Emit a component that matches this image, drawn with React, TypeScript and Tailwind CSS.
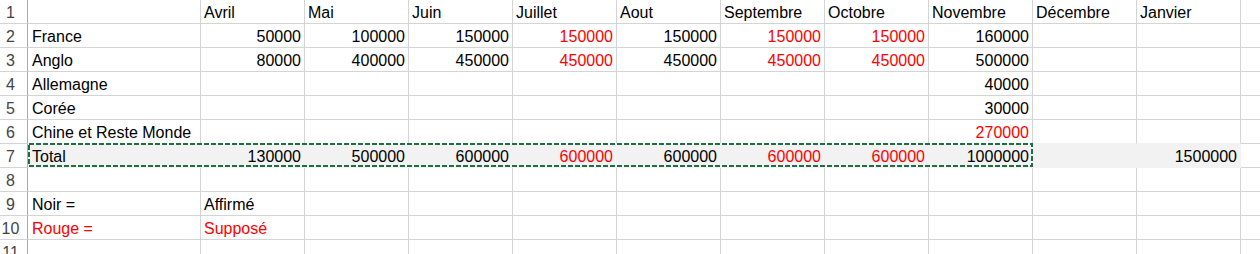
import React from "react";

type Cell = { v: string; red?: boolean; num?: boolean };

const months = ["Avril", "Mai", "Juin", "Juillet", "Aout", "Septembre", "Octobre", "Novembre", "Décembre", "Janvier"];

// red columns (index in months): Juillet, Septembre, Octobre
const redCols = [3, 5, 6];

function numRow(label: string, values: (string | null)[], redIdx: number[] = redCols): Cell[] {
  return [
    { v: label },
    ...values.map((v, i) => ({ v: v ?? "", num: true, red: redIdx.includes(i) })),
  ];
}

const rows: Cell[][] = [
  [{ v: "" }, ...months.map((m) => ({ v: m }))],
  numRow("France", ["50000", "100000", "150000", "150000", "150000", "150000", "150000", "160000", null, null]),
  numRow("Anglo", ["80000", "400000", "450000", "450000", "450000", "450000", "450000", "500000", null, null]),
  numRow("Allemagne", [null, null, null, null, null, null, null, "40000", null, null]),
  numRow("Corée", [null, null, null, null, null, null, null, "30000", null, null]),
  numRow("Chine et Reste Monde", [null, null, null, null, null, null, null, "270000", null, null], [7]),
  numRow("Total", ["130000", "500000", "600000", "600000", "600000", "600000", "600000", "1000000", null, "1500000"]),
  [],
  [{ v: "Noir =" }, { v: "Affirmé" }],
  [{ v: "Rouge =", red: true }, { v: "Supposé", red: true }],
  [],
];

const TOTAL_ROW = 6;
const COLS = 12; // A..J + the partial K column

export default function App() {
  return (
    <div
      className="relative w-[1260px] h-[254px] overflow-hidden bg-white text-[16px] leading-[16px] text-black"
      style={{ fontFamily: '"Liberation Sans", Arial, sans-serif' }}
    >
      {rows.map((row, r) => {
        const filled = r === TOTAL_ROW;
        const aboveFill = r === TOTAL_ROW - 1;
        return (
          <div key={r} className="flex h-[24px]">
            <div className="w-[28px] h-[24px] shrink-0 border-r border-r-[#ababab] border-b border-b-[#d4d4d4] flex items-end pb-[2px]">
              <span className="w-[21px] text-center text-[#444444]">{r + 1}</span>
            </div>
            {Array.from({ length: COLS }).map((_, c) => {
              const cell = row[c];
              const last = c === COLS - 1;
              let cls = "h-[24px] shrink-0 border-r border-b flex items-end pb-[2px] whitespace-nowrap ";
              cls += last ? "w-[40px] " : c === 0 ? "w-[173px] " : "w-[104px] ";
              if (filled && !last) {
                cls += "bg-[#f2f2f2] border-r-[#f2f2f2] border-b-[#f2f2f2] ";
              } else if (aboveFill && !last) {
                cls += "border-r-[#d4d4d4] border-b-[#f2f2f2] ";
              } else {
                cls += "border-r-[#d4d4d4] border-b-[#d4d4d4] ";
              }
              cls += cell?.num ? "justify-end pr-[3px] " : c === 0 ? "justify-start pl-[4px] " : "justify-start pl-[3px] ";
              cls += cell?.red ? "text-[#ff0000]" : "text-black";
              return (
                <div key={c} className={cls}>
                  {cell?.v}
                </div>
              );
            })}
          </div>
        );
      })}

      {/* copy selection marquee around the Total row */}
      <svg className="absolute left-[28px] top-[143px]" width="1005" height="24" viewBox="0 0 1005 24">
        <rect x="1" y="1" width="1003" height="22" fill="none" stroke="#1e6e42" strokeWidth="2" strokeDasharray="5 2" />
      </svg>
    </div>
  );
}
